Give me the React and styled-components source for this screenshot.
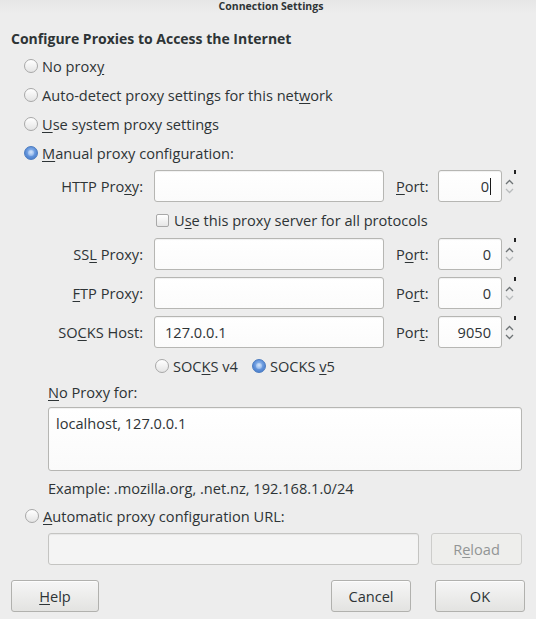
import React from "react";
import styled, { createGlobalStyle, css } from "styled-components";

const GlobalStyle = createGlobalStyle`
  html, body {
    margin: 0;
    padding: 0;
    background: #ededed;
  }
  body {
    font-family: "Open Sans", "Noto Sans", sans-serif;
    font-size: 14.6px;
    color: #2e3436;
  }
  * { box-sizing: border-box; }
`;

const Window = styled.div`
  width: 536px;
  height: 619px;
  background: #ededed;
  display: flex;
  flex-direction: column;
  overflow: hidden;
`;

const TitleBar = styled.div`
  height: 14px;
  display: flex;
  justify-content: center;
  align-items: center;
  font-size: 10.5px;
  font-weight: bold;
  line-height: 14px;
  color: #2e3436;
  background: linear-gradient(#e6e6e6, #ededed);
  padding-left: 6px;
  margin-top: -1px;
`;

const Body = styled.div`
  display: flex;
  flex-direction: column;
  padding: 0 11px;
`;

const Heading = styled.div`
  font-weight: bold;
  font-size: 14px;
  height: 24px;
  line-height: 24px;
  margin-top: 14px;
`;

const Mn = styled.span`
  text-decoration: underline;
  text-underline-offset: 2px;
`;

const RadioRow = styled.label`
  display: flex;
  align-items: center;
  height: 29px;
  padding-left: ${(p) => p.$indent ?? 13}px;
  gap: 4px;
  white-space: nowrap;
`;

const RadioDot = styled.span`
  width: 14px;
  height: 14px;
  border-radius: 50%;
  border: 1px solid #a8a8a8;
  background: linear-gradient(#ffffff, #e4e4e4);
  display: inline-flex;
  align-items: center;
  justify-content: center;
  flex: none;
  ${(p) =>
    p.$on &&
    css`
      border-color: #4a7bc0;
      background: radial-gradient(circle at 50% 40%, #9ec3f3 0%, #5d8fd8 55%, #3f73c2 100%);
      &::after {
        content: "";
        width: 6px;
        height: 6px;
        border-radius: 50%;
        background: radial-gradient(circle at 50% 35%, #d6e6fb, #7aa7e6);
      }
    `}
`;

const Radio = ({ on, indent, children }) => (
  <RadioRow $indent={indent}>
    <RadioDot $on={on} />
    <span>{children}</span>
  </RadioRow>
);

const ProxyGrid = styled.div`
  display: grid;
  grid-template-columns: 106px 230px 54px 64px 14px;
  row-gap: 7px;
  margin-top: 3px;
  padding-left: 37px;
  align-items: center;
`;

const FieldLabel = styled.span`
  text-align: right;
  padding-right: 11px;
  white-space: nowrap;
`;

const PortLabel = styled.span`
  padding-left: 12px;
  white-space: nowrap;
`;

const Entry = styled.div`
  height: 32px;
  border: 1px solid #b6b6b3;
  border-radius: 3px;
  background: linear-gradient(#ffffff, #fbfbfb);
  box-shadow: inset 0 1px 1px rgba(0, 0, 0, 0.06);
  display: flex;
  align-items: center;
  padding: 0 10px;
  justify-content: ${(p) => (p.$right ? "flex-end" : "flex-start")};
  ${(p) =>
    p.$disabled &&
    css`
      background: #f4f4f4;
      border-color: #c4c4c2;
    `}
`;

const Caret = styled.span`
  width: 1px;
  height: 17px;
  background: #1a1a1a;
  margin-left: 1px;
`;

const Spinner = styled.div`
  position: relative;
  height: 32px;
  display: flex;
  flex-direction: column;
  justify-content: center;
  align-items: center;
  gap: 3px;
  &::before {
    content: "";
    position: absolute;
    top: 0;
    right: 0;
    width: 2px;
    height: 4px;
    background: #222;
  }
`;

const Chevron = ({ up, faded }) => (
  <svg width="9" height="6" viewBox="0 0 9 6">
    <path
      d={up ? "M1 5 L4.5 1.5 L8 5" : "M1 1 L4.5 4.5 L8 1"}
      fill="none"
      stroke={faded ? "#b9bcbd" : "#6e7375"}
      strokeWidth="1.3"
    />
  </svg>
);

const Spin = ({ downFaded = true }) => (
  <Spinner>
    <Chevron up />
    <Chevron faded={downFaded} />
  </Spinner>
);

const CheckRow = styled.label`
  grid-column: 2 / span 4;
  display: flex;
  align-items: center;
  gap: 5px;
  height: 22px;
  padding-left: 2px;
  white-space: nowrap;
`;

const CheckBox = styled.span`
  width: 13px;
  height: 13px;
  border: 1px solid #a8a8a8;
  border-radius: 2px;
  background: linear-gradient(#ffffff, #e6e6e6);
  flex: none;
`;

const SocksRow = styled.div`
  grid-column: 2 / span 4;
  display: flex;
  align-items: center;
  height: 22px;
  gap: 14px;
  padding-left: 1px;
`;

const Section = styled.div`
  display: flex;
  flex-direction: column;
  padding-left: 37px;
  margin-bottom: 3px;
`;

const SmallLabel = styled.div`
  height: 20px;
  line-height: 20px;
  white-space: nowrap;
  margin-top: ${(p) => p.$top || 0}px;
`;

const TextArea = styled.div`
  height: 64px;
  width: 474px;
  border: 1px solid #b6b6b3;
  border-radius: 3px;
  background: linear-gradient(#ffffff, #fafafa);
  box-shadow: inset 0 1px 1px rgba(0, 0, 0, 0.06);
  padding: 6px 7px;
  margin-top: 5px;
  line-height: 18px;
`;

const UrlRow = styled.div`
  display: flex;
  gap: 12px;
  margin-top: 3px;
  margin-left: 37px;
`;

const Button = styled.div`
  height: ${(p) => p.$h || 32}px;
  width: ${(p) => p.$w}px;
  border: 1px solid #b1b1ae;
  border-radius: 3px;
  background: linear-gradient(#f6f6f6, #e3e3e1);
  box-shadow: inset 0 1px 0 rgba(255, 255, 255, 0.8);
  display: flex;
  align-items: center;
  justify-content: center;
  color: #2e3436;
  ${(p) =>
    p.$disabled &&
    css`
      background: #eeeeec;
      border-color: #cdcdcb;
      color: #929595;
      box-shadow: none;
    `}
`;

const ButtonBar = styled.div`
  display: flex;
  align-items: center;
  margin-top: 15px;
  gap: 24px;
  & > :first-child {
    margin-right: auto;
  }
`;

export default function App() {
  return (
    <Window>
      <GlobalStyle />
      <TitleBar>Connection Settings</TitleBar>
      <Body>
        <Heading>Configure Proxies to Access the Internet</Heading>
        <Radio>
          No prox<Mn>y</Mn>
        </Radio>
        <Radio>
          Auto-detect proxy settings for this net<Mn>w</Mn>ork
        </Radio>
        <Radio>
          <Mn>U</Mn>se system proxy settings
        </Radio>
        <Radio on>
          <Mn>M</Mn>anual proxy configuration:
        </Radio>

        <ProxyGrid>
          <FieldLabel>
            HTTP Pro<Mn>x</Mn>y:
          </FieldLabel>
          <Entry />
          <PortLabel>
            <Mn>P</Mn>ort:
          </PortLabel>
          <Entry $right>
            0<Caret />
          </Entry>
          <Spin />

          <span />
          <CheckRow>
            <CheckBox />
            <span>
              U<Mn>s</Mn>e this proxy server for all protocols
            </span>
          </CheckRow>

          <FieldLabel>
            SS<Mn>L</Mn> Proxy:
          </FieldLabel>
          <Entry />
          <PortLabel>
            P<Mn>o</Mn>rt:
          </PortLabel>
          <Entry $right>0</Entry>
          <Spin />

          <FieldLabel>
            <Mn>F</Mn>TP Proxy:
          </FieldLabel>
          <Entry />
          <PortLabel>
            Po<Mn>r</Mn>t:
          </PortLabel>
          <Entry $right>0</Entry>
          <Spin />

          <FieldLabel>
            SO<Mn>C</Mn>KS Host:
          </FieldLabel>
          <Entry>127.0.0.1</Entry>
          <PortLabel>
            Por<Mn>t</Mn>:
          </PortLabel>
          <Entry $right>9050</Entry>
          <Spin downFaded={false} />

          <span />
          <SocksRow>
            <Radio indent={0}>
              SOC<Mn>K</Mn>S v4
            </Radio>
            <Radio indent={0} on>
              SOCKS <Mn>v</Mn>5
            </Radio>
          </SocksRow>
        </ProxyGrid>

        <Section>
          <SmallLabel $top={5}>
            <Mn>N</Mn>o Proxy for:
          </SmallLabel>
          <TextArea>localhost, 127.0.0.1</TextArea>
          <SmallLabel $top={7}>Example: .mozilla.org, .net.nz, 192.168.1.0/24</SmallLabel>
        </Section>

        <Radio indent={14}>
          <Mn>A</Mn>utomatic proxy configuration URL:
        </Radio>
        <UrlRow>
          <Entry $disabled style={{ width: 371 }} />
          <Button $w={91} $disabled>
            R<Mn>e</Mn>load
          </Button>
        </UrlRow>

        <ButtonBar>
          <Button $w={88}>
            <Mn>H</Mn>elp
          </Button>
          <Button $w={80}>Cancel</Button>
          <Button $w={90}>OK</Button>
        </ButtonBar>
      </Body>
    </Window>
  );
}
